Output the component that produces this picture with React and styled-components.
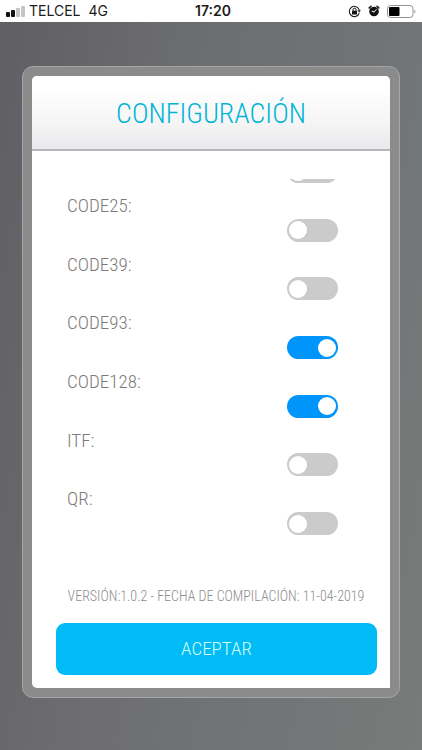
import React from "react";
import styled, { createGlobalStyle } from "styled-components";

const GlobalStyle = createGlobalStyle`
  *, *::before, *::after { box-sizing: border-box; }
  body { margin: 0; }
`;

const narrow = `"Roboto Condensed", "Liberation Sans Narrow", "Arial Narrow", "Liberation Sans", sans-serif`;

const Screen = styled.div`
  min-height: 100vh;
  display: flex;
  flex-direction: column;
  font-family: ${narrow};
  font-weight: 300;
  background:
    linear-gradient(180deg, rgba(100, 110, 120, 0.12), rgba(120, 120, 118, 0.12)),
    linear-gradient(98deg, #5f5c60 0%, #6c6c6f 35%, #717476 70%, #777b79 100%);
`;

const StatusBar = styled.header`
  height: 22px;
  flex: none;
  display: grid;
  grid-template-columns: 1fr auto 1fr;
  align-items: center;
  padding: 0 6px;
  background: #fff;
  color: #1c1c1c;
  font: 14px/20px Inter, "Liberation Sans", sans-serif;
`;

const Carrier = styled.div`
  display: flex;
  align-items: center;
  gap: 4px;
`;

const Network = styled.span`
  margin-left: 4px;
`;

const Clock = styled.time`
  padding-left: 4px;
  font-weight: 600;
`;

const Indicators = styled.div`
  display: flex;
  align-items: center;
  justify-content: flex-end;
  gap: 7px;
`;

const Frame = styled.main`
  flex: 1;
  display: flex;
  margin: 44px 22px 52px;
  padding: 9px;
  border: 1px solid #a4a5a6;
  border-radius: 11px;
  background: #8b8b8c;
`;

const Card = styled.section`
  flex: 1;
  min-width: 0;
  display: flex;
  flex-direction: column;
  background: #fff;
  border-radius: 5px 5px 0 5px;
  overflow: hidden;
`;

const CardHeader = styled.div`
  height: 75px;
  flex: none;
  display: flex;
  align-items: center;
  justify-content: center;
  padding-top: 2px;
  border-bottom: 2px solid #b5b5bb;
  background: linear-gradient(#fff 15%, #f5f5f5 65%, #e9e9ed);
`;

const Title = styled.h1`
  margin: 0;
  font-size: 28px;
  line-height: 32px;
  font-weight: 300;
  color: #00b4d8;
`;

const Options = styled.div`
  flex: 1;
  display: flex;
  flex-direction: column;
  margin: 28px 52px 49px 35px;
`;

const Option = styled.label`
  flex: ${(p) => (p.$scrolled ? "0 0 4px" : "1 0 48px")};
  min-height: 0;
  display: flex;
  justify-content: space-between;
  align-items: flex-end;
  overflow: hidden;
`;

const OptionName = styled.span`
  align-self: flex-start;
  padding-top: 11px;
  font-size: 19px;
  line-height: 24px;
  color: #7c7a7a;
`;

const Toggle = styled.input`
  appearance: none;
  flex: none;
  display: flex;
  align-items: center;
  justify-content: flex-start;
  width: 51px;
  height: 23px;
  margin: 0 0 0 auto;
  padding: 0 2px;
  border-radius: 12px;
  background: #cbcbcb;

  &::before {
    content: "";
    width: 18px;
    height: 18px;
    border-radius: 50%;
    background: #fff;
  }

  &:checked {
    background: #0095fb;
    justify-content: flex-end;
  }
`;

const Version = styled.p`
  margin: 0;
  padding-left: 10px;
  text-align: center;
  font-size: 14px;
  line-height: 24px;
  white-space: nowrap;
  color: #8e8c8c;
`;

const AcceptButton = styled.button`
  height: 52px;
  flex: none;
  margin: 15px 13px 13px 24px;
  border: 0;
  border-radius: 9px;
  background: #00bbf5;
  color: #d4fffb;
  font: 300 19px/24px ${narrow};
`;

const options = [
  { name: "CODE25:", on: false },
  { name: "CODE39:", on: false },
  { name: "CODE93:", on: true },
  { name: "CODE128:", on: true },
  { name: "ITF:", on: false },
  { name: "QR:", on: false },
];

const SignalIcon = () => (
  <svg width="19" height="11" viewBox="0 0 19 11" aria-hidden="true">
    <rect x="0" y="6" width="4" height="5" rx="1" fill="#111" />
    <rect x="5" y="4" width="4" height="7" rx="1" fill="#111" />
    <rect x="10" y="2" width="4" height="9" rx="1" fill="#c4c4c4" />
    <rect x="15" y="0" width="4" height="11" rx="1" fill="#c4c4c4" />
  </svg>
);

const RotationLockIcon = () => (
  <svg width="13" height="13" viewBox="0 0 13 13" aria-hidden="true">
    <path d="M11.2 8.2A5.1 5.1 0 1 1 11.3 5" fill="none" stroke="#222" strokeWidth="1.1" />
    <path d="M9.3 5.2h3.6l-1.7 2.6z" fill="#222" />
    <rect x="4" y="5.8" width="5" height="3.8" rx="0.5" fill="#111" />
    <path d="M5 6V4.7a1.5 1.5 0 0 1 3 0V6" fill="none" stroke="#111" strokeWidth="1" />
  </svg>
);

const AlarmIcon = () => (
  <svg width="12" height="12" viewBox="0 0 12 12" aria-hidden="true">
    <circle cx="6" cy="6.5" r="4.8" fill="#111" />
    <path d="M1.2 2.9L3 1.3M10.8 2.9L9 1.3" stroke="#111" strokeWidth="1.5" strokeLinecap="round" />
    <path d="M6 6.9L8.3 4.5M6 6.9L4 6.2" stroke="#fff" strokeWidth="1" strokeLinecap="round" />
  </svg>
);

const BatteryIcon = () => (
  <svg width="29" height="13" viewBox="0 0 29 13" aria-hidden="true">
    <rect x="0.5" y="0.5" width="25.5" height="12" rx="3" fill="#fff" stroke="#929292" />
    <rect x="2" y="2" width="10.5" height="9" rx="1" fill="#000" />
    <path d="M27.5 4.5c1.3.6 1.3 3.4 0 4z" fill="#929292" />
  </svg>
);

export default function App() {
  return (
    <Screen>
      <GlobalStyle />
      <StatusBar>
        <Carrier>
          <SignalIcon />
          <span>TELCEL</span>
          <Network>4G</Network>
        </Carrier>
        <Clock>17:20</Clock>
        <Indicators>
          <RotationLockIcon />
          <AlarmIcon />
          <BatteryIcon />
        </Indicators>
      </StatusBar>
      <Frame>
        <Card>
          <CardHeader>
            <Title>CONFIGURACIÓN</Title>
          </CardHeader>
          <Options>
            <Option $scrolled>
              <Toggle type="checkbox" aria-label="CODE" />
            </Option>
            {options.map((o) => (
              <Option key={o.name}>
                <OptionName>{o.name}</OptionName>
                <Toggle type="checkbox" defaultChecked={o.on} />
              </Option>
            ))}
          </Options>
          <Version>VERSIÓN:1.0.2 - FECHA DE COMPILACIÓN: 11-04-2019</Version>
          <AcceptButton type="button">ACEPTAR</AcceptButton>
        </Card>
      </Frame>
    </Screen>
  );
}
